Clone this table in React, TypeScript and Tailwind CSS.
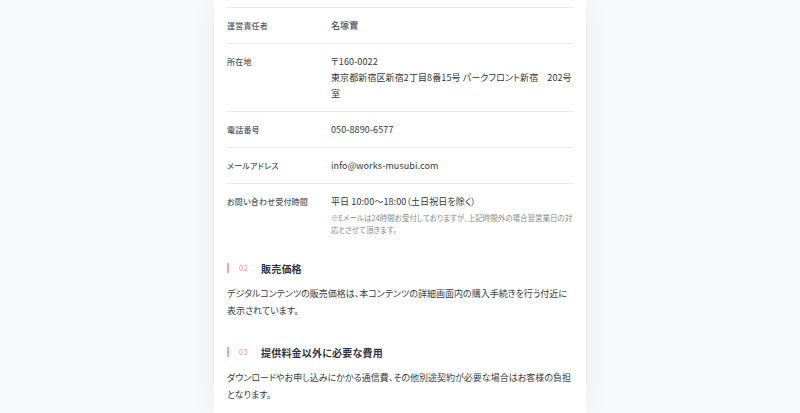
import React from "react";

const rows: { label: string; value: React.ReactNode; last?: boolean }[] = [
  { label: "運営責任者", value: <p>名塚實</p> },
  {
    label: "所在地",
    value: (
      <>
        <p>〒160-0022</p>
        <p>東京都新宿区新宿2丁目8番15号 パークフロント新宿　202号室</p>
      </>
    ),
  },
  { label: "電話番号", value: <p>050-8890-6577</p> },
  { label: "メールアドレス", value: <p>info@works-musubi.com</p> },
  {
    label: "お問い合わせ受付時間",
    value: (
      <>
        <p>平日 10:00〜18:00（土日祝日を除く）</p>
        <p className="text-[7.5px] leading-[12px] tracking-normal text-[#8a8a8a] mt-[2px]">
          ※Eメールは24時間お受付しておりますが、上記時間外の場合翌営業日の対応とさせて頂きます。
        </p>
      </>
    ),
    last: true,
  },
];

function Heading({ num, title }: { num: string; title: string }) {
  return (
    <div className="flex items-center h-[16px]">
      <span className="w-[2px] h-[10px] bg-[#f3a2b6]" />
      <span className="ml-[10px] w-[22px] text-[7.5px] tracking-[0.5px] text-[#ee8fa8]">{num}</span>
      <h2 className="text-[10px] font-bold text-[#2f3441] tracking-[0.2px]">{title}</h2>
    </div>
  );
}

export default function App() {
  return (
    <div
      className="min-h-screen w-full bg-[#f7f8fa] flex justify-center [font-feature-settings:'palt']"
      style={{ fontFamily: '"Noto Sans CJK JP", "Noto Sans", sans-serif' }}
    >
      <div className="w-[372px] bg-white px-[13px] pt-[7px] h-[413px] overflow-hidden shadow-[0_0_24px_rgba(20,30,60,0.05)]">
        <div className="border-t border-[#ebebeb]">
          {rows.map((r) => (
            <div
              key={r.label}
              className={`flex pt-[10px] pb-[9px] ${r.last ? "" : "border-b border-[#ebebeb]"}`}
            >
              <div className="w-[104px] shrink-0 pt-[1px] text-[8px] leading-[14px] font-medium text-[#555a62] tracking-[0.2px]">
                {r.label}
              </div>
              <div className="flex-1 text-[9px] leading-[16px] text-[#333740] tracking-[0.1px]">{r.value}</div>
            </div>
          ))}
        </div>

        <div className="mt-[15px]">
          <Heading num="02" title="販売価格" />
          <p className="mt-[9px] text-[9px] leading-[17px] text-[#3a3d44]">
            デジタルコンテンツの販売価格は、本コンテンツの詳細画面内の購入手続きを行う付近に表示されています。
          </p>
        </div>

        <div className="mt-[25px]">
          <Heading num="03" title="提供料金以外に必要な費用" />
          <p className="mt-[10px] text-[9px] leading-[16.5px] text-[#3a3d44]">
            ダウンロードやお申し込みにかかる通信費、その他別途契約が必要な場合はお客様の負担となります。
          </p>
        </div>
      </div>
    </div>
  );
}
